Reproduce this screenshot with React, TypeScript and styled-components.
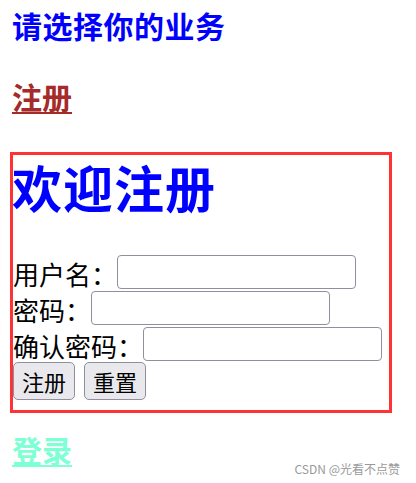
import React from "react";
import styled, { createGlobalStyle } from "styled-components";

const GlobalStyle = createGlobalStyle`
  html, body {
    margin: 0;
    padding: 0;
    background: #ffffff;
  }
  body {
    font-family: "Noto Sans CJK SC", "Noto Sans", sans-serif;
    color: #000;
  }
`;

const Page = styled.div`
  position: relative;
  min-height: 483px;
  box-sizing: border-box;
  padding: 10px 0 0 10px;
`;

const Title = styled.div`
  margin: 0;
  padding-left: 2px;
  font-size: 30px;
  line-height: 30px;
  font-weight: 700;
  color: #0000ff;
  letter-spacing: 0.5px;
`;

const NavLink = styled.a<{ $color: string; $top: number }>`
  display: block;
  width: fit-content;
  margin: ${(p) => p.$top}px 0 0 2px;
  font-size: 30px;
  line-height: 30px;
  font-weight: 700;
  color: ${(p) => p.$color};
  text-decoration: underline;
  text-decoration-thickness: 2px;
  text-underline-offset: 3px;
  cursor: pointer;
`;

const Box = styled.div`
  margin-top: 41px;
  width: 382px;
  box-sizing: border-box;
  border: 3px solid #ff3333;
  padding: 6px 0 10px 0;
`;

const Heading = styled.h1`
  margin: 0 0 0 -1px;
  font-size: 50px;
  line-height: 50px;
  font-weight: 700;
  color: #0000ff;
  letter-spacing: 1px;
`;

const Form = styled.form`
  margin-top: 43px;
  display: flex;
  flex-direction: column;
`;

const Row = styled.div`
  display: flex;
  align-items: center;
  height: 36px;
  font-size: 26px;
`;

const Label = styled.span`
  display: inline-block;
  line-height: 26px;
  padding-top: 4px;
`;

const Input = styled.input`
  width: 239px;
  height: 34px;
  box-sizing: border-box;
  border: 1px solid #8f8f9d;
  border-radius: 4px;
  background: #fff;
  padding: 0 4px;
  font-size: 16px;
`;

const ButtonRow = styled.div`
  display: flex;
  gap: 9px;
  height: 38px;
`;

const Button = styled.button`
  width: 62px;
  height: 38px;
  box-sizing: border-box;
  border: 1px solid #8f8f9d;
  border-radius: 5px;
  background: #e9e9ed;
  color: #000;
  font-family: "Noto Sans CJK SC", sans-serif;
  font-size: 22px;
  line-height: 22px;
  padding: 0;
`;

const Watermark = styled.div`
  position: absolute;
  right: 16px;
  bottom: 7px;
  font-size: 12px;
  line-height: 14px;
  color: #9a9a9a;
`;

export default function App() {
  return (
    <>
      <GlobalStyle />
      <Page>
        <Title>请选择你的业务</Title>
        <NavLink $color="#a52a2a" $top={41}>注册</NavLink>
        <Box>
          <Heading>欢迎注册</Heading>
          <Form onSubmit={(e) => e.preventDefault()}>
            <Row>
              <Label>用户名：</Label>
              <Input type="text" />
            </Row>
            <Row>
              <Label>密码：</Label>
              <Input type="password" />
            </Row>
            <Row>
              <Label>确认密码：</Label>
              <Input type="password" />
            </Row>
            <ButtonRow>
              <Button type="submit">注册</Button>
              <Button type="reset">重置</Button>
            </ButtonRow>
          </Form>
        </Box>
        <NavLink $color="#7fffd4" $top={21}>登录</NavLink>
        <Watermark>CSDN @光看不点赞</Watermark>
      </Page>
    </>
  );
}
